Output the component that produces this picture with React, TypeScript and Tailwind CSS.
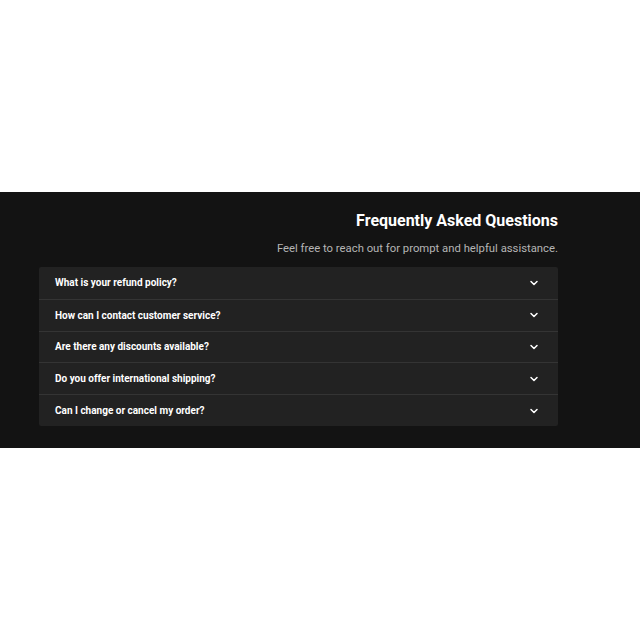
import { ChevronDown } from "lucide-react";

const QUESTIONS = [
  "What is your refund policy?",
  "How can I contact customer service?",
  "Are there any discounts available?",
  "Do you offer international shipping?",
  "Can I change or cancel my order?",
];

export default function App() {
  return (
    <div className="min-h-screen flex items-center bg-white" style={{ fontFamily: "Roboto, 'Liberation Sans', sans-serif" }}>
      <section className="w-full bg-[#131313] pt-[16px] pb-[22px]">
        <div className="ml-[39px] w-[519px]">
          <h2 className="text-right text-[16px] leading-[25px] font-bold text-white">Frequently Asked Questions</h2>
          <p className="mt-[8px] text-right text-[11.3px] leading-[16px] text-[#b5b5b5]">Feel free to reach out for prompt and helpful assistance.</p>
          <div className="mt-[10px] rounded-[2px] bg-[#222222] overflow-hidden">
            {QUESTIONS.map((q, i) => (
              <div
                key={q}
                className={`h-[31.8px] flex items-center justify-between pl-4 pr-[18px] ${i > 0 ? "border-t border-[#343434]" : ""}`}
              >
                <span className="text-[10px] font-bold text-white">{q}</span>
                <ChevronDown className="w-[12px] h-[12px] text-white" strokeWidth={3} />
              </div>
            ))}
          </div>
        </div>
      </section>
    </div>
  );
}
